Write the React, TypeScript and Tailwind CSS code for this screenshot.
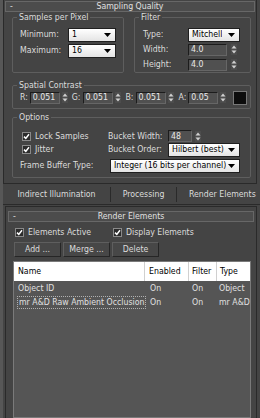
import React from "react";

const Arrow = () => (
  <svg width="7" height="4" viewBox="0 0 7 4" className="shrink-0">
    <path d="M0 0H7L3.5 4Z" fill="#000" />
  </svg>
);

const Spin = () => (
  <svg width="6" height="11" viewBox="0 0 6 11" className="shrink-0">
    <rect x="0" y="0" width="6" height="11" fill="#4c4c4c" />
    <path d="M3 1.5L5.5 4.5H0.5Z" fill="#d0d0d0" />
    <path d="M3 9.5L5.5 6.5H0.5Z" fill="#d0d0d0" />
  </svg>
);

function Dropdown({ value, className = "" }: { value: string; className?: string }) {
  return (
    <div
      className={`flex h-[14px] items-center justify-between border border-[#1f1f1f] bg-linear-to-b from-white to-[#e4e4e4] pl-[3px] pr-[4px] text-black ${className}`}
    >
      <span className="truncate">{value}</span>
      <Arrow />
    </div>
  );
}

function Field({ value, className = "" }: { value: string; className?: string }) {
  return (
    <div
      className={`flex h-[12px] items-center border border-t-[#1c1c1c] border-l-[#1c1c1c] border-r-[#666] border-b-[#666] bg-[#505050] px-[2px] text-[#e8e8e8] ${className}`}
    >
      {value}
    </div>
  );
}

function Check() {
  return (
    <span className="inline-flex h-[9px] w-[9px] shrink-0 items-center justify-center border border-[#8a8a8a] bg-[#2c2c2c]">
      <svg width="7" height="7" viewBox="0 0 7 7">
        <path d="M1 3.6L2.8 5.4L6 1.2" stroke="#fff" strokeWidth="1.5" fill="none" />
      </svg>
    </span>
  );
}

function Group({
  title,
  className = "",
  children,
}: {
  title: string;
  className?: string;
  children: React.ReactNode;
}) {
  return (
    <fieldset className={`rounded-[2px] border border-[#5e5e5e] ${className}`}>
      <legend className="ml-[4px] px-[2px] text-[#dcdcdc]">{title}</legend>
      {children}
    </fieldset>
  );
}

function RolloutHeader({ title }: { title: string }) {
  return (
    <div className="flex h-[11px] items-center border border-[#676767] bg-[#4c4c4c] text-[#e0e0e0]">
      <span className="w-[20px] pl-[4px]">-</span>
      <span className="flex-1 text-center pr-[20px]">{title}</span>
    </div>
  );
}

function ColorSpin({ label, value, gap = "mr-[4px]" }: { label: string; value: string; gap?: string }) {
  return (
    <div className={`flex items-center ${gap}`}>
      <span className="mr-[2px]">{label}</span>
      <Field value={value} className="w-[30px]" />
      <span className="ml-[2px]">
        <Spin />
      </span>
    </div>
  );
}

export default function App() {
  return (
    <div className="flex h-[418px] w-[260px] flex-col overflow-hidden border-l-[3px] border-[#575757] bg-[#444] font-['DejaVu_Sans_Condensed','Liberation_Sans',sans-serif] text-[8.7px] leading-none text-[#dcdcdc]">
      {/* Sampling Quality rollout */}
      <div className="mr-[3px] flex h-[184px] shrink-0 flex-col border-x border-b border-[#2a2a2a] pl-[8px] pr-[5px]">
        <div className="-ml-[7px] -mr-[4px] mt-[1px]">
          <RolloutHeader title="Sampling Quality" />
        </div>

        <div className="mt-[1px] flex gap-[10px]">
          <Group title="Samples per Pixel" className="h-[60px] w-[112px]">
            <div className="flex flex-col gap-[2px] pl-[7px] pt-[6px]">
              <div className="flex h-[14px] items-center">
                <span className="w-[48px]">Minimum:</span>
                <Dropdown value="1" className="w-[48px]" />
              </div>
              <div className="flex h-[14px] items-center">
                <span className="w-[48px]">Maximum:</span>
                <Dropdown value="16" className="w-[48px]" />
              </div>
            </div>
          </Group>
          <Group title="Filter" className="h-[60px] flex-1">
            <div className="flex flex-col gap-[1px] pl-[8px] pt-[6px]">
              <div className="flex h-[14px] items-center">
                <span className="w-[45px]">Type:</span>
                <Dropdown value="Mitchell" className="w-[52px]" />
              </div>
              <div className="flex h-[14px] items-center">
                <span className="w-[45px]">Width:</span>
                <Field value="4.0" className="w-[39px]" />
                <span className="ml-[4px]">
                  <Spin />
                </span>
              </div>
              <div className="flex h-[14px] items-center">
                <span className="w-[45px]">Height:</span>
                <Field value="4.0" className="w-[39px]" />
                <span className="ml-[4px]">
                  <Spin />
                </span>
              </div>
            </div>
          </Group>
        </div>

        <Group title="Spatial Contrast" className="mt-[8px] h-[28px]">
          <div className="flex h-[14px] items-center pl-[7px] pt-[2px]">
            <ColorSpin label="R:" value="0.051" />
            <ColorSpin label="G:" value="0.051" gap="mr-[5px]" />
            <ColorSpin label="B:" value="0.051" gap="mr-[5px]" />
            <ColorSpin label="A:" value="0.05" gap="mr-[7px]" />
            <span className="h-[14px] w-[14px] border border-[#777] bg-[#0c0c0c]" />
          </div>
        </Group>

        <Group title="Options" className="mt-[4px] h-[65px]">
          <div className="flex flex-col pl-[7px] pt-[8px]">
            <div className="flex h-[13px] items-center">
              <div className="flex w-[88px] items-center gap-[4px] pl-[2px]">
                <Check />
                <span>Lock Samples</span>
              </div>
              <span className="w-[60px]">Bucket Width:</span>
              <Field value="48" className="w-[24px]" />
              <span className="ml-[3px]">
                <Spin />
              </span>
            </div>
            <div className="flex h-[14px] items-center">
              <div className="flex w-[88px] items-center gap-[4px] pl-[2px]">
                <Check />
                <span>Jitter</span>
              </div>
              <span className="w-[60px]">Bucket Order:</span>
              <Dropdown value="Hilbert (best)" className="w-[72px]" />
            </div>
            <div className="mt-[2px] flex h-[14px] items-center">
              <span className="w-[90px]">Frame Buffer Type:</span>
              <Dropdown value="Integer (16 bits per channel)" className="w-[130px]" />
            </div>
          </div>
        </Group>
      </div>

      {/* Tabs */}
      <div className="flex h-[21px] shrink-0 items-center border-b border-[#2a2a2a] text-[#dcdcdc]">
        <div className="w-[107px] text-center">Indirect Illumination</div>
        <div className="h-[15px] w-px bg-[#2a2a2a]" />
        <div className="w-[65px] text-center">Processing</div>
        <div className="h-[15px] w-px bg-[#2a2a2a]" />
        <div className="flex-1 pl-[12px] whitespace-nowrap">Render Elements</div>
      </div>

      {/* Render Elements rollout */}
      <div className="ml-[2px] mr-[3px] mt-[1px] flex flex-1 flex-col border-x border-t border-[#2a2a2a] pl-[7px] pr-[5px]">
        <div className="-ml-[5px] -mr-[3px] mt-[4px]">
          <RolloutHeader title="Render Elements" />
        </div>

        <div className="mt-[5px] flex h-[10px] items-center pl-[2px]">
          <div className="flex w-[98px] items-center gap-[4px]">
            <Check />
            <span>Elements Active</span>
          </div>
          <div className="flex items-center gap-[4px]">
            <Check />
            <span>Display Elements</span>
          </div>
        </div>

        <div className="mt-[5px] flex gap-[2px] pl-[1px]">
          {["Add ...", "Merge ...", "Delete"].map((b) => (
            <div
              key={b}
              className="flex h-[15px] w-[47px] items-center justify-center border border-t-[#5e5e5e] border-l-[#5e5e5e] border-r-[#262626] border-b-[#262626] bg-[#474747]"
            >
              {b}
            </div>
          ))}
        </div>

        <div className="mt-[4px] flex flex-1 flex-col border border-[#7a7a7a] bg-[#555]">
          <div className="flex h-[19px] items-center bg-white text-black">
            <div className="h-full w-[131px] border-r border-[#d0d0d0] pl-[4px] leading-[19px]">Name</div>
            <div className="h-full w-[44px] border-r border-[#d0d0d0] pl-[4px] leading-[19px]">Enabled</div>
            <div className="h-full w-[28px] border-r border-[#d0d0d0] pl-[3px] leading-[19px]">Filter</div>
            <div className="h-full flex-1 pl-[3px] leading-[19px]">Type</div>
          </div>
          {[
            ["Object ID", "On", "On", "Object"],
            ["mr A&D Raw Ambient Occlusion", "On", "On", "mr A&D"],
          ].map((r, i) => (
            <div key={i} className="mt-[1px] flex h-[13px] items-center whitespace-nowrap text-[#e0e0e0]">
              <div className="h-full w-[131px] shrink-0 pl-[3px]">
                <span
                  className={`flex h-full w-fit items-center px-[1px] ${
                    i === 1 ? "border border-dotted border-[#b0b0b0]" : ""
                  }`}
                >
                  {r[0]}
                </span>
              </div>
              <div className="w-[44px] shrink-0 pl-[5px]">{r[1]}</div>
              <div className="w-[28px] shrink-0 pl-[3px]">{r[2]}</div>
              <div className="min-w-0 flex-1 pl-[2px]">{r[3]}</div>
            </div>
          ))}
        </div>
      </div>
    </div>
  );
}
